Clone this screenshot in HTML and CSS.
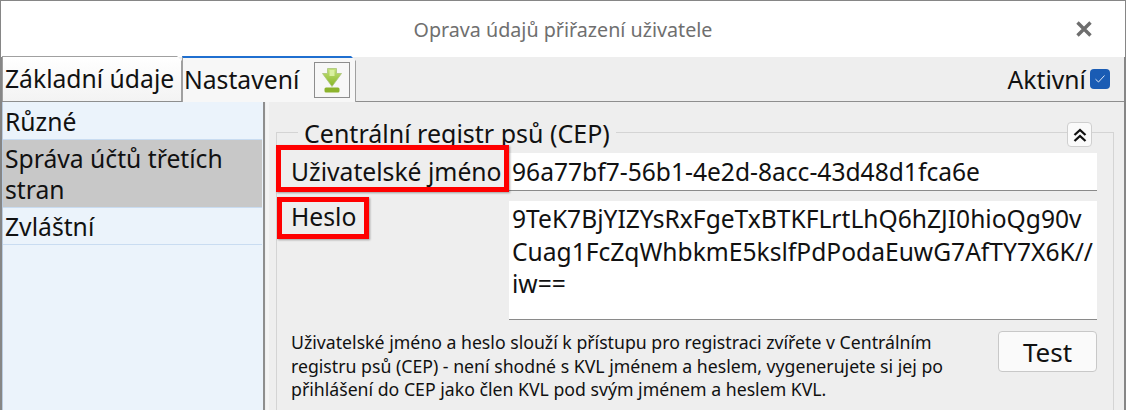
FILE: index.html
```html
<!DOCTYPE html>
<html lang="cs">
<head>
<meta charset="utf-8">
<title>Oprava údajů přiřazení uživatele</title>
<link rel="stylesheet" href="styles.css">
</head>
<body>
<div class="window">
  <header class="titlebar">
    <span class="title">Oprava údajů přiřazení uživatele</span>
    <svg class="close" width="16" height="16" viewBox="0 0 16 16"><path d="M1.500 1.500 14.500 14.500M14.500 1.500 1.500 14.500" stroke="#6e6e6e" stroke-width="3.400" fill="none"/></svg>
  </header>
  <div class="tabbar">
    <div class="tab">Základní údaje</div>
    <div class="tab active">Nastavení
      <span class="tool">
        <svg width="22" height="26" viewBox="0 0 22 26"><defs><linearGradient id="g" x1="0" y1="0" x2="0" y2="1"><stop offset="0" stop-color="#c4e27c"/><stop offset="1" stop-color="#86b524"/></linearGradient></defs><path d="M6.500 1.500h9v5h5L11 19.500 1.500 6.500h5z" fill="url(#g)" stroke="#a9c478" stroke-width=".8"/><path d="M8.500 3h5v6h-5z" fill="#d9f0a0"/><rect x="3.500" y="20.500" width="15" height="5" rx="1.500" fill="#8cb32c"/></svg>
      </span>
    </div>
    <label class="active-flag">Aktivní
      <span class="check"><svg width="12" height="10" viewBox="0 0 12 10"><path d="M1.500 5.200 4.500 8l6-6.500" stroke="#dfe9f7" fill="none"/></svg></span>
    </label>
  </div>
  <div class="body">
    <nav class="side">
      <div class="item">Různé</div>
      <div class="item selected">Správa účtů třetích stran</div>
      <div class="item">Zvláštní</div>
    </nav>
    <main class="panel">
      <section class="group">
        <div class="legend">Centrální registr psů (CEP)</div>
        <button class="collapse"><svg width="16" height="16" viewBox="0 0 16 16"><path d="M2.500 8 8 3l5.500 5M2.500 14 8 9l5.500 5" stroke="#111" stroke-width="2.300" fill="none"/></svg></button>
        <div class="row">
          <div class="lbl">Uživatelské jméno<span class="mark mark-user"></span></div>
          <div class="field">96a77bf7-56b1-4e2d-8acc-43d48d1fca6e</div>
        </div>
        <div class="row row-pass">
          <div class="lbl">Heslo<span class="mark mark-pass"></span></div>
          <div class="field area">9TeK7BjYIZYsRxFgeTxBTKFLrtLhQ6hZJI0hioQg90v<br>Cuag1FcZqWhbkmE5kslfPdPodaEuwG7AfTY7X6K//<br>iw==</div>
        </div>
        <div class="foot">
          <p class="note">Uživatelské jméno a heslo slouží k přístupu pro registraci zvířete v Centrálním<br>registru psů (CEP) - není shodné s KVL jménem a heslem, vygenerujete si jej po<br>přihlášení do CEP jako člen KVL pod svým jménem a heslem KVL.</p>
          <button class="test">Test</button>
        </div>
      </section>
    </main>
  </div>
</div>
</body>
</html>
```
FILE: styles.css
```css
* { box-sizing: border-box; }
html, body { margin: 0; height: 100%; overflow: hidden; }
body { font-family: "Noto Sans", "Open Sans", sans-serif; color: #111; background: #eee; }
.window { width: 1126px; height: 410px; border: 1px solid #868686; border-width: 1px 2px 0 2px; display: flex; flex-direction: column; }
.titlebar { height: 56px; flex: none; background: #fff; display: flex; align-items: center; justify-content: center; position: relative; margin: 0 -1px; }
.title { font-size: 19.700px; color: #6f6f6f; }
.close { position: absolute; right: 33px; top: 20px; }
.tabbar { height: 45px; flex: none; display: flex; align-items: flex-end; border-bottom: 1px solid #8e8e8e; background: #eee; }
.tab { height: 45px; font-size: 24.700px; line-height: 44px; padding: 0 3px; background: linear-gradient(#fff, #f3f3f3); border: 1px solid #a0a0a0; border-bottom: 0; clip-path: polygon(0 0, calc(100% - 5px) 0, 100% 5px, 100% 100%, 0 100%); white-space: nowrap; }
.tab:first-child { width: 180px; padding-left: 2px; }
.tab.active { width: 174px; display: flex; align-items: center; gap: 15px; border-top: 2px solid #1f6fd0; background: #f7f7f7; padding: 0 1px; height: 46px; margin-bottom: -1px; }
.tool { width: 36px; height: 36px; border: 1px solid #8d8d8d; display: flex; align-items: center; justify-content: center; }
.active-flag { margin-left: auto; height: 44px; display: flex; align-items: center; font-size: 24.700px; gap: 4px; padding-right: 14px; }
.check { width: 20px; height: 20px; border-radius: 4px; background: #1a5cb4; display: flex; align-items: center; justify-content: center; }
.body { flex: 1; display: flex; min-height: 0; background: #eee; }
.side { width: 263px; flex: none; background: #ebf3fb; border-left: 1px solid #b9cbe0; border-right: 2px solid #8e8e8e; padding-top: 1px; }
.item { font-size: 24.700px; line-height: 31px; padding: 3px 3px 2px 2px; border-bottom: 1px solid #c9dcf1; margin-right: 1px; }
.item.selected { background: #c8c8c8; }
.panel { flex: 1; padding: 6px 10px 0 5px; display: flex; min-width: 0; border-left: 3px solid #f4f4f4; margin-left: 1px; }
.group { flex: 1; margin-top: 24px; border: 1px solid #d4d4d4; border-bottom: 0; position: relative; padding: 20px 16px 0 14px; margin-left: 2px; }
.legend { position: absolute; left: 21px; top: -13px; font-size: 25px; line-height: 26px; background: #eee; padding: 0 6px; white-space: nowrap; }
.collapse { position: absolute; right: 21px; top: -11px; width: 25px; height: 25px; padding: 0; background: #fafafa; border: 1px solid #cfcfcf; border-radius: 4px; display: flex; align-items: center; justify-content: center; }
.row { display: flex; }
.row-pass { margin-top: 10px; }
.lbl { width: 218px; flex: none; font-size: 24.700px; line-height: 37px; position: relative; white-space: nowrap; }
.field { flex: 1; height: 38px; background: #fff; border-bottom: 1px solid #8a8a8a; font-size: 24.600px; line-height: 37px; padding-left: 3px; white-space: nowrap; overflow: hidden; }
.field.area { height: 119px; line-height: 32.500px; padding-top: 2px; }
.row-pass .lbl { line-height: 32px; }
.mark { position: absolute; border: 5px solid #f00; box-shadow: 1px 1px 2px rgba(0,0,0,.35); pointer-events: none; }
.mark-user { left: -15px; top: -8px; width: 233px; height: 47px; }
.mark-pass { left: -14px; top: -4px; width: 92px; height: 42px; }
.foot { display: flex; justify-content: space-between; align-items: flex-start; margin-top: 11px; }
.note { margin: 0; font-size: 17.700px; line-height: 23.500px; white-space: nowrap; }
.test { width: 99px; height: 41px; background: #fafafa; border: 1px solid #c8c8c8; border-radius: 4px; font: inherit; font-size: 26px; color: #111; padding: 0; }
```
